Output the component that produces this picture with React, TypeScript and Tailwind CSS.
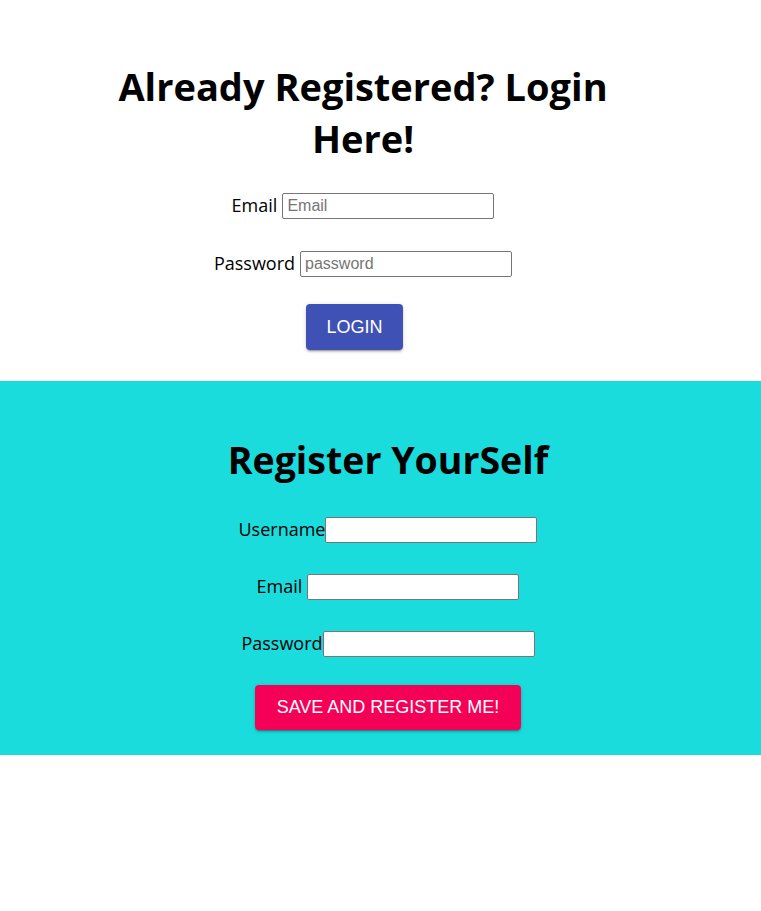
import type { ReactNode } from "react";

const labelFont = "font-['Open_Sans','Noto_Sans',sans-serif]";

function Row({ children, className = "" }: { children: ReactNode; className?: string }) {
  return <div className={`flex items-center justify-center ${className}`}>{children}</div>;
}

function TextInput({ placeholder, type = "text" }: { placeholder?: string; type?: string }) {
  return (
    <input
      type={type}
      placeholder={placeholder}
      className="h-[26px] w-[212px] rounded-[2px] border border-[#767676] bg-white px-[4px] font-['Liberation_Sans',Arial,sans-serif] text-[16px] text-black placeholder:text-[#757575]"
    />
  );
}

export default function App() {
  return (
    <div className="min-h-[911px] bg-white text-black">
      {/* login */}
      <section className="w-[726px] pt-[60px] pb-[31px] text-center">
        <h1
          className={`mx-auto w-[526px] ${labelFont} text-[38px] font-bold leading-[52px]`}
        >
          Already Registered? Login Here!
        </h1>
        <form className={`${labelFont} mt-[28px] flex flex-col text-[18px]`}>
          <Row>
            <label className="mr-[5px]">Email</label>
            <TextInput placeholder="Email" type="email" />
          </Row>
          <Row className="mt-[31px]">
            <label className="mr-[5px]">Password</label>
            <TextInput placeholder="password" type="password" />
          </Row>
          <Row className="mt-[27px]">
            <button
              type="button"
              className="mr-[17px] h-[46px] rounded-[4px] bg-[#3f51b5] px-[20px] font-['Liberation_Sans',Arial,sans-serif] text-[18px] text-white shadow-[0_3px_1px_-2px_rgba(0,0,0,0.2),0_2px_2px_0_rgba(0,0,0,0.14),0_1px_5px_0_rgba(0,0,0,0.12)]"
            >
              LOGIN
            </button>
          </Row>
        </form>
      </section>

      {/* register */}
      <section className="flex justify-center bg-[#1bdcdc] pt-[53px] pb-[25px] pl-[15px]">
        <div className="text-center">
          <h2 className={`${labelFont} text-[37.5px] font-bold leading-[52px]`}>Register YourSelf</h2>
          <form className={`${labelFont} mt-[30px] flex flex-col text-[18px]`}>
            <Row>
              <label>Username</label>
              <TextInput />
            </Row>
            <Row className="mt-[30px]">
              <label className="mr-[5px]">Email</label>
              <TextInput type="email" />
            </Row>
            <Row className="mt-[30px]">
              <label>Password</label>
              <TextInput type="password" />
            </Row>
            <Row className="mt-[28px]">
              <button
                type="button"
                className="h-[45px] rounded-[4px] bg-[#f50057] px-[22px] font-['Liberation_Sans',Arial,sans-serif] text-[18px] text-white shadow-[0_3px_1px_-2px_rgba(0,0,0,0.2),0_2px_2px_0_rgba(0,0,0,0.14),0_1px_5px_0_rgba(0,0,0,0.12)]"
              >
                SAVE AND REGISTER ME!
              </button>
            </Row>
          </form>
        </div>
      </section>
    </div>
  );
}
